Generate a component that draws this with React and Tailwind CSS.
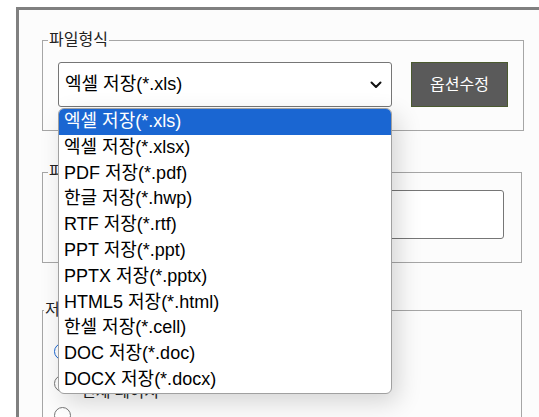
import React from 'react';

const font = { fontFamily: '"Liberation Sans", "Noto Sans CJK KR", sans-serif' };

const options = [
  '엑셀 저장(*.xls)',
  '엑셀 저장(*.xlsx)',
  'PDF 저장(*.pdf)',
  '한글 저장(*.hwp)',
  'RTF 저장(*.rtf)',
  'PPT 저장(*.ppt)',
  'PPTX 저장(*.pptx)',
  'HTML5 저장(*.html)',
  '한셀 저장(*.cell)',
  'DOC 저장(*.doc)',
  'DOCX 저장(*.docx)',
];

const Legend = ({ children }) => (
  <legend className="-ml-[10px] px-[1px] text-[16px] leading-[20px] text-[#222]">{children}</legend>
);

const Radio = ({ checked, label }) => (
  <label className="flex items-start gap-[10px] h-[32px] text-[16px] text-[#222]">
    <span
      className={
        'mt-[1px] w-[17px] h-[17px] shrink-0 rounded-full border flex items-center justify-center bg-white ' +
        (checked ? 'border-[#1a66d2]' : 'border-[#767676]')
      }
    >
      {checked && <span className="w-[9px] h-[9px] rounded-full bg-[#1a66d2]" />}
    </span>
    <span className="mt-[8px] leading-[20px]">{label}</span>
  </label>
);

export default function App() {
  return (
    <div className="w-[539px] h-[417px] overflow-hidden bg-white" style={font}>
      <div className="ml-[16px] mt-[7px] w-[560px] h-[440px] border-[3px] border-[#808080] bg-[#fcfcfc] pl-[23px] pt-[20px]">
        <fieldset className="w-[480px] border border-[#a6a6a6] px-[15px] pt-[12px] pb-[23px]">
          <Legend>파일형식</Legend>
          <div className="flex items-center gap-[19px]">
            <div className="relative">
              <div className="w-[334px] h-[45px] rounded-[3px] border border-[#767676] bg-white flex items-center justify-between pl-[6px] pr-[8px]">
                <span className="text-[18px] text-black">엑셀 저장(*.xls)</span>
                <svg width="14" height="14" viewBox="0 0 14 14" fill="none">
                  <path d="M2.5 4.5 L7 9 L11.5 4.5" stroke="#111" strokeWidth="2" strokeLinecap="round" strokeLinejoin="round" />
                </svg>
              </div>
              <div className="absolute left-0 top-[46px] z-10 w-[334px] rounded-[6px] border border-[#a0a0a0] bg-white shadow-[6px_8px_24px_rgba(0,0,0,0.16)] overflow-hidden">
                {options.map((o, i) => (
                  <div
                    key={o}
                    className={
                      'h-[25.8px] leading-[25.8px] pl-[5px] text-[18px] ' +
                      (i === 0 ? 'bg-[#1a66d2] text-white' : 'text-black')
                    }
                  >
                    {o}
                  </div>
                ))}
              </div>
            </div>
            <button className="w-[97px] h-[45px] bg-[#5a5a5a] border border-[#4b5a30] text-white text-[16px]">
              옵션수정
            </button>
          </div>
        </fieldset>

        <fieldset className="mt-[31px] w-[480px] border border-[#a6a6a6] px-[15px] pt-[8px] pb-[23px]">
          <Legend>파일명</Legend>
          <div className="w-[446px] h-[49px] rounded-[3px] border border-[#767676] bg-white" />
        </fieldset>

        <fieldset className="mt-[37px] w-[480px] border border-[#a6a6a6] pl-[11px] pt-[22px] pb-[10px]">
          <Legend>저장범위</Legend>
          <Radio checked label="현재 페이지" />
          <Radio label="전체 페이지" />
          <Radio label="" />
        </fieldset>
      </div>
    </div>
  );
}
